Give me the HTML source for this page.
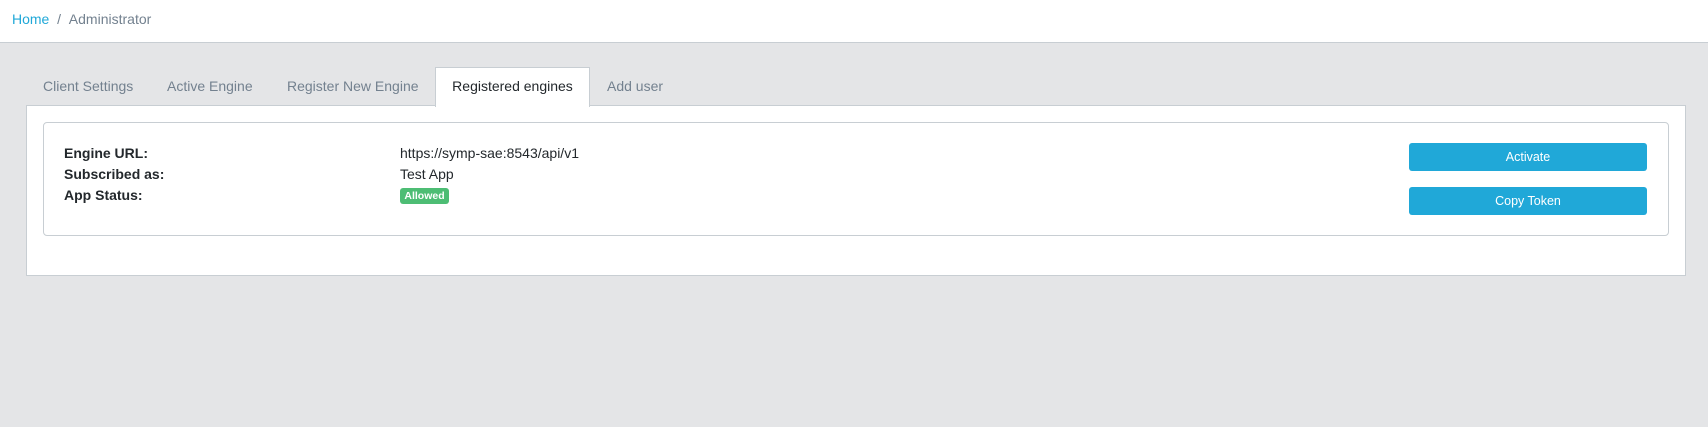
<!DOCTYPE html>
<html><head><style>
*{margin:0;padding:0;box-sizing:border-box}
body{width:1708px;height:427px;background:#e4e5e7;font-family:"Liberation Sans",sans-serif;font-size:14px;color:#23282c;position:relative;overflow:hidden}
.hdr{position:absolute;left:0;top:0;width:1708px;height:43px;background:#fff;border-bottom:1px solid #c8ced3}
.bc{position:absolute;left:12px;top:11px;color:#73818f}
.bc a{color:#20a8d8;text-decoration:none}
.tab{position:absolute;top:78px;color:#73818f}
.atab{position:absolute;left:435px;top:67px;width:155px;height:40px;background:#fff;border:1px solid #c8ced3;border-bottom:none;z-index:2;color:#23282c;padding-top:10px;text-align:center}
.panel{position:absolute;left:26px;top:105px;width:1660px;height:171px;background:#fff;border:1px solid #c8ced3}
.card{position:absolute;left:43px;top:122px;width:1626px;height:114px;border:1px solid #c8ced3;border-radius:4px;background:#fff}
.lbl{position:absolute;left:64px;font-weight:bold}
.val{position:absolute;left:400px}
.btn{position:absolute;left:1409px;width:238px;background:#20a8d8;color:#fff;border-radius:3px;font-size:12.5px;text-align:center}
.badge{position:absolute;left:400px;top:188px;width:49px;height:16px;background:#4dbd74;color:#fff;font-size:10.5px;font-weight:bold;border-radius:3px;text-align:center;line-height:16px}
</style></head><body>
<div class="hdr"><div class="bc"><a>Home</a>&nbsp; / &nbsp;Administrator</div></div>
<div class="tab" style="left:43px">Client Settings</div>
<div class="tab" style="left:167px">Active Engine</div>
<div class="tab" style="left:287px">Register New Engine</div>
<div class="atab">Registered engines</div>
<div class="tab" style="left:607px">Add user</div>
<div class="panel"></div>
<div class="card"></div>
<div class="lbl" style="top:145px">Engine URL:</div>
<div class="lbl" style="top:166px">Subscribed as:</div>
<div class="lbl" style="top:187px">App Status:</div>
<div class="val" style="top:145px">https://symp-sae:8543/api/v1</div>
<div class="val" style="top:166px">Test App</div>
<div class="badge">Allowed</div>
<div class="btn" style="top:143px;height:28px;line-height:28px">Activate</div>
<div class="btn" style="top:187px;height:28px;line-height:28px">Copy Token</div>
</body></html>
